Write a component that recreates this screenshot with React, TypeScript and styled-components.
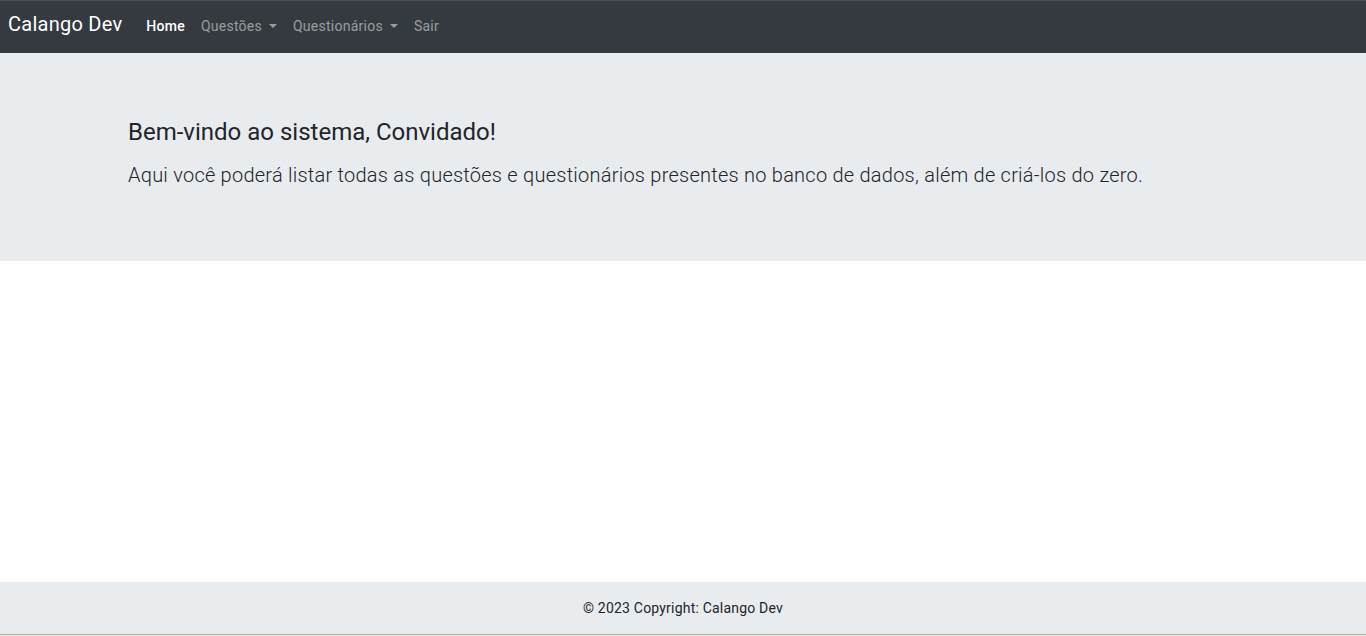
import React from "react";
import styled, { createGlobalStyle } from "styled-components";

const Global = createGlobalStyle`
  html, body { margin: 0; padding: 0; background: #fff; }
  body {
    font-family: Roboto, "Liberation Sans", Arial, sans-serif;
    color: #212529;
    -webkit-font-smoothing: antialiased;
  }
  * { box-sizing: border-box; }
`;

const Page = styled.div`
  display: flex;
  flex-direction: column;
  height: 636px;
  border-bottom: 1px solid #e6e6cf;
`;

const NavBar = styled.nav`
  height: 53px;
  background: #343a40;
  border-top: 1px solid #4d5257;
  display: flex;
  align-items: center;
  padding: 0 8px;
`;

const Brand = styled.a`
  color: #fff;
  font-size: 20px;
  line-height: 30px;
  letter-spacing: 0.25px;
  margin-right: 16px;
  margin-top: -6px;
  text-decoration: none;
`;

const NavList = styled.ul`
  display: flex;
  list-style: none;
  margin: -2px 0 0;
  padding: 0;
`;

const NavLink = styled.a<{ $active?: boolean; $toggle?: boolean }>`
  display: flex;
  align-items: center;
  padding: 0 8px;
  font-size: 14px;
  line-height: 21px;
  letter-spacing: 0.25px;
  font-weight: ${(p) => (p.$active ? 500 : 400)};
  color: ${(p) => (p.$active ? "#fff" : "rgba(255,255,255,0.5)")};
  text-decoration: none;
  &::after {
    content: ${(p) => (p.$toggle ? "''" : "none")};
    display: inline-block;
    margin-left: 7px;
    border-top: 4px solid currentColor;
    border-left: 4px solid transparent;
    border-right: 4px solid transparent;
    margin-top: -1px;
  }
`;

const Jumbotron = styled.section`
  background: #e9ecef;
  padding: 65px 0 71px;
`;

const Container = styled.div`
  width: 1140px;
  margin: 0 auto;
  padding: 0 15px;
`;

const Title = styled.h4`
  margin: 0 0 13px;
  font-size: 24px;
  line-height: 29px;
  font-weight: 400;
  color: #212529;
`;

const Lead = styled.p`
  margin: 0;
  font-size: 20px;
  line-height: 30px;
  font-weight: 300;
  letter-spacing: 0.24px;
  color: #212529;
`;

const Main = styled.main`
  flex: 1;
`;

const Footer = styled.footer`
  background: #e9ecef;
  height: 53px;
  display: flex;
  align-items: center;
  justify-content: center;
  font-size: 14px;
  letter-spacing: 0.2px;
  color: #212529;
  border-bottom: 1px solid #b5b9ab;
`;

export default function App() {
  return (
    <>
      <Global />
      <Page>
        <NavBar>
          <Brand href="#">Calango Dev</Brand>
          <NavList>
            <li><NavLink $active href="#">Home</NavLink></li>
            <li><NavLink $toggle href="#">Questões</NavLink></li>
            <li><NavLink $toggle href="#">Questionários</NavLink></li>
            <li><NavLink href="#">Sair</NavLink></li>
          </NavList>
        </NavBar>
        <Jumbotron>
          <Container>
            <Title>Bem-vindo ao sistema, Convidado!</Title>
            <Lead>
              Aqui você poderá listar todas as questões e questionários presentes no banco de dados, além de criá-los do zero.
            </Lead>
          </Container>
        </Jumbotron>
        <Main />
        <Footer>© 2023 Copyright: Calango Dev</Footer>
      </Page>
    </>
  );
}
